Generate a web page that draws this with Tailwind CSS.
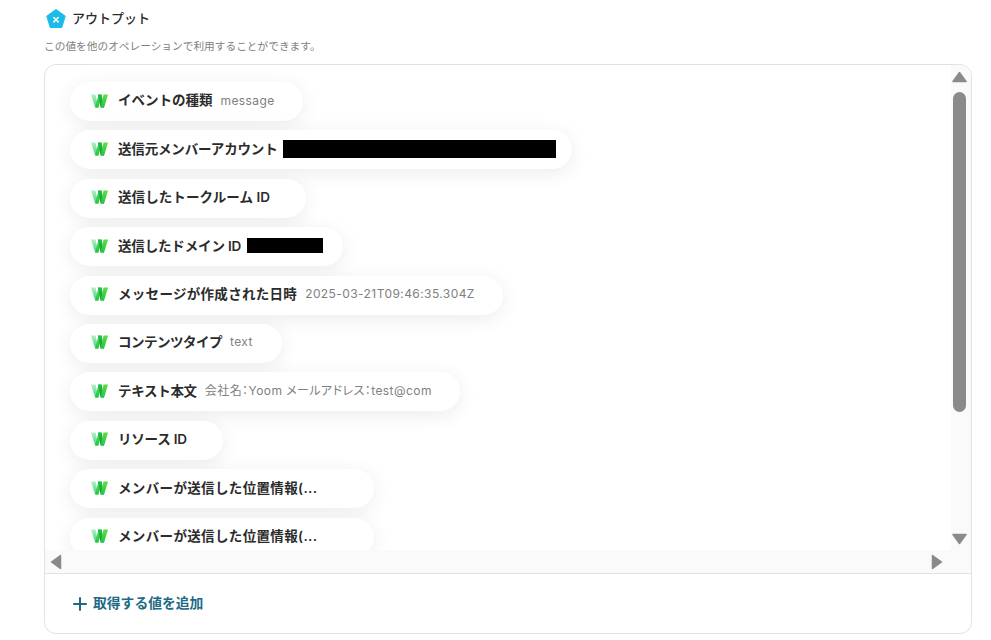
<!DOCTYPE html>
<html lang="ja">

<head>
    <meta charset="UTF-8">
    <title>アウトプット</title>
    <script src="https://cdn.jsdelivr.net/npm/@tailwindcss/browser@4"></script>
</head>

<body class="bg-white h-[640px] overflow-hidden font-['Inter','Noto_Sans_CJK_JP',sans-serif] text-[#2b2b2b]">

    <svg width="0" height="0" class="absolute">
        <defs>
            <linearGradient id="wa" x1="0" y1="0" x2="0" y2="1">
                <stop offset="0" stop-color="#b5efca" />
                <stop offset="1" stop-color="#3fd070" />
            </linearGradient>
            <linearGradient id="wb" x1="0" y1="0" x2="0" y2="1">
                <stop offset="0" stop-color="#22c055" />
                <stop offset="1" stop-color="#0a9a35" />
            </linearGradient>
            <linearGradient id="wc" x1="0" y1="0" x2="0" y2="1">
                <stop offset="0" stop-color="#62dd3f" />
                <stop offset="1" stop-color="#22c544" />
            </linearGradient>
            <symbol id="wlogo" viewBox="0 0 17 14">
                <path d="M0 0.500h4.500L7.500 13.500H4.200z" fill="url(#wa)" />
                <path d="M4.200 13.500L7.500 0.500h3.200L7.500 13.500z" fill="url(#wc)" />
                <path d="M6.800 0.500h3.900l2.400 13H9.600z" fill="url(#wb)" />
                <path d="M9.600 13.500L12.500 0.500H17L13.100 13.500z" fill="url(#wc)" />
            </symbol>
        </defs>
    </svg>

    <!-- Header -->
    <div class="pl-[46px] pt-[8px] h-[64px]">
        <div class="flex items-center gap-[6px] h-[21px]">
            <svg width="20" height="20" viewBox="0 0 20 20">
                <path d="M10 0.500l9.200 6.600-3.400 11.400H4.200L0.800 7.100z" fill="#1cbbe8" stroke="#1cbbe8" stroke-width="1" stroke-linejoin="round" />
                <path d="M7.800 8.500l4.400 4.400M12.200 8.500l-4.400 4.400" stroke="#fff" stroke-width="1.500" stroke-linecap="round" />
            </svg>
            <span class="text-[13px] font-medium leading-none">アウトプット</span>
        </div>
        <p class="-ml-[2px] mt-[11px] text-[10.700px] leading-[14px] text-[#808080]">この値を他のオペレーションで利用することができます。</p>
    </div>

    <!-- Output panel -->
    <div class="ml-[44px] w-[928px] h-[570px] border border-[#e2e2e2] rounded-[12px] overflow-hidden flex flex-col bg-white">
        <div class="flex h-[485px]">
            <div class="w-[906px] h-[485px] overflow-hidden pl-[25px] pt-[17px] flex flex-col gap-[9.400px]">
                <div class="h-[39px] shrink-0 w-fit rounded-full bg-white shadow-[0_4px_20px_rgba(0,0,0,0.08)] flex items-center pb-[2px] pl-[21px] pr-[28px]">
                    <svg width="17" height="14" class="mr-[10px]"><use href="#wlogo" /></svg>
                    <span class="text-[13.500px] font-semibold">イベントの種類</span>
                    <span class="ml-[8px] text-[12px] tracking-[0.4px] text-[#808080]">message</span>
                </div>
                <div class="h-[39px] shrink-0 w-fit rounded-full bg-white shadow-[0_4px_20px_rgba(0,0,0,0.08)] flex items-center pb-[2px] pl-[21px] pr-[16px]">
                    <svg width="17" height="14" class="mr-[10px]"><use href="#wlogo" /></svg>
                    <span class="text-[13.500px] font-semibold tracking-[-0.16px]">送信元メンバーアカウント</span>
                    <span class="ml-[5px] w-[273px] h-[18px] bg-black"></span>
                </div>
                <div class="h-[39px] shrink-0 w-fit rounded-full bg-white shadow-[0_4px_20px_rgba(0,0,0,0.08)] flex items-center pb-[2px] pl-[21px] pr-[36px]">
                    <svg width="17" height="14" class="mr-[10px]"><use href="#wlogo" /></svg>
                    <span class="text-[13.500px] font-semibold tracking-[0.08px]">送信したトークルーム ID</span>
                </div>
                <div class="h-[39px] shrink-0 w-fit rounded-full bg-white shadow-[0_4px_20px_rgba(0,0,0,0.08)] flex items-center pb-[2px] pl-[21px] pr-[20px]">
                    <svg width="17" height="14" class="mr-[10px]"><use href="#wlogo" /></svg>
                    <span class="text-[13.500px] font-semibold tracking-[-0.16px]">送信したドメイン ID</span>
                    <span class="ml-[6px] w-[76px] h-[15px] bg-black"></span>
                </div>
                <div class="h-[39px] shrink-0 w-fit rounded-full bg-white shadow-[0_4px_20px_rgba(0,0,0,0.08)] flex items-center pb-[2px] pl-[21px] pr-[28px]">
                    <svg width="17" height="14" class="mr-[10px]"><use href="#wlogo" /></svg>
                    <span class="text-[13.500px] font-semibold tracking-[0.3px]">メッセージが作成された日時</span>
                    <span class="ml-[8px] text-[12px] tracking-[0.42px] text-[#808080]">2025-03-21T09:46:35.304Z</span>
                </div>
                <div class="h-[39px] shrink-0 w-fit rounded-full bg-white shadow-[0_4px_20px_rgba(0,0,0,0.08)] flex items-center pb-[2px] pl-[21px] pr-[29px]">
                    <svg width="17" height="14" class="mr-[10px]"><use href="#wlogo" /></svg>
                    <span class="text-[13.500px] font-semibold tracking-[-0.5px]">コンテンツタイプ</span>
                    <span class="ml-[8px] text-[12px] tracking-[0.4px] text-[#808080]">text</span>
                </div>
                <div class="h-[39px] shrink-0 w-fit rounded-full bg-white shadow-[0_4px_20px_rgba(0,0,0,0.08)] flex items-center pb-[2px] pl-[21px] pr-[28px]">
                    <svg width="17" height="14" class="mr-[10px]"><use href="#wlogo" /></svg>
                    <span class="text-[13.500px] font-semibold tracking-[-0.3px]">テキスト本文</span>
                    <span class="ml-[8px] text-[12px] tracking-[0.43px] text-[#808080] [font-feature-settings:'palt']">会社名：Yoom メールアドレス：test@com</span>
                </div>
                <div class="h-[39px] shrink-0 w-fit rounded-full bg-white shadow-[0_4px_20px_rgba(0,0,0,0.08)] flex items-center pb-[2px] pl-[21px] pr-[36px]">
                    <svg width="17" height="14" class="mr-[10px]"><use href="#wlogo" /></svg>
                    <span class="text-[13.500px] font-semibold tracking-[-0.2px]">リソース ID</span>
                </div>
                <div class="h-[39px] shrink-0 w-fit rounded-full bg-white shadow-[0_4px_20px_rgba(0,0,0,0.08)] flex items-center pb-[2px] pl-[21px] pr-[57px]">
                    <svg width="17" height="14" class="mr-[10px]"><use href="#wlogo" /></svg>
                    <span class="text-[13.500px] font-semibold tracking-[0.35px]">メンバーが送信した位置情報(...</span>
                </div>
                <div class="h-[39px] shrink-0 w-fit rounded-full bg-white shadow-[0_4px_20px_rgba(0,0,0,0.08)] flex items-center pb-[2px] pl-[21px] pr-[57px]">
                    <svg width="17" height="14" class="mr-[10px]"><use href="#wlogo" /></svg>
                    <span class="text-[13.500px] font-semibold tracking-[0.35px]">メンバーが送信した位置情報(...</span>
                </div>
            </div>

            <!-- Vertical scrollbar -->
            <div class="w-[20px] h-[485px] bg-[#fafafa] flex flex-col pl-[1px] pt-[6px]">
                <svg width="15" height="12" viewBox="0 0 15 12"><path d="M7.500 1.500L14 10.500H1z" fill="#8a8a8a" stroke="#8a8a8a" stroke-width="1.500" stroke-linejoin="round" /></svg>
                <div class="mt-[9px] ml-[1px] w-[13px] h-[320px] rounded-full bg-[#8a8a8a]"></div>
                <svg class="mt-[121px]" width="15" height="12" viewBox="0 0 15 12"><path d="M7.500 10.500L14 1.500H1z" fill="#8a8a8a" stroke="#8a8a8a" stroke-width="1.500" stroke-linejoin="round" /></svg>
            </div>
        </div>

        <!-- Horizontal scrollbar -->
        <div class="h-[23px] bg-[#fafafa] flex items-center justify-between pl-[5px] pr-[28px]">
            <svg width="12" height="16" viewBox="0 0 12 16"><path d="M1.500 8L10.500 1.500V14.500z" fill="#8a8a8a" stroke="#8a8a8a" stroke-width="1.500" stroke-linejoin="round" /></svg>
            <svg width="12" height="16" viewBox="0 0 12 16"><path d="M10.500 8L1.500 1.500V14.500z" fill="#8a8a8a" stroke="#8a8a8a" stroke-width="1.500" stroke-linejoin="round" /></svg>
        </div>

        <!-- Add value -->
        <div class="flex-1 border-t border-[#e2e2e2] pl-[28px] flex items-center gap-[6px] text-[#1d6a85]">
            <svg width="14" height="14" viewBox="0 0 14 14"><path d="M7 1v12M1 7h12" stroke="#1d6a85" stroke-width="2" stroke-linecap="round" /></svg>
            <span class="text-[13.800px] font-semibold">取得する値を追加</span>
        </div>
    </div>

</body>

</html>
